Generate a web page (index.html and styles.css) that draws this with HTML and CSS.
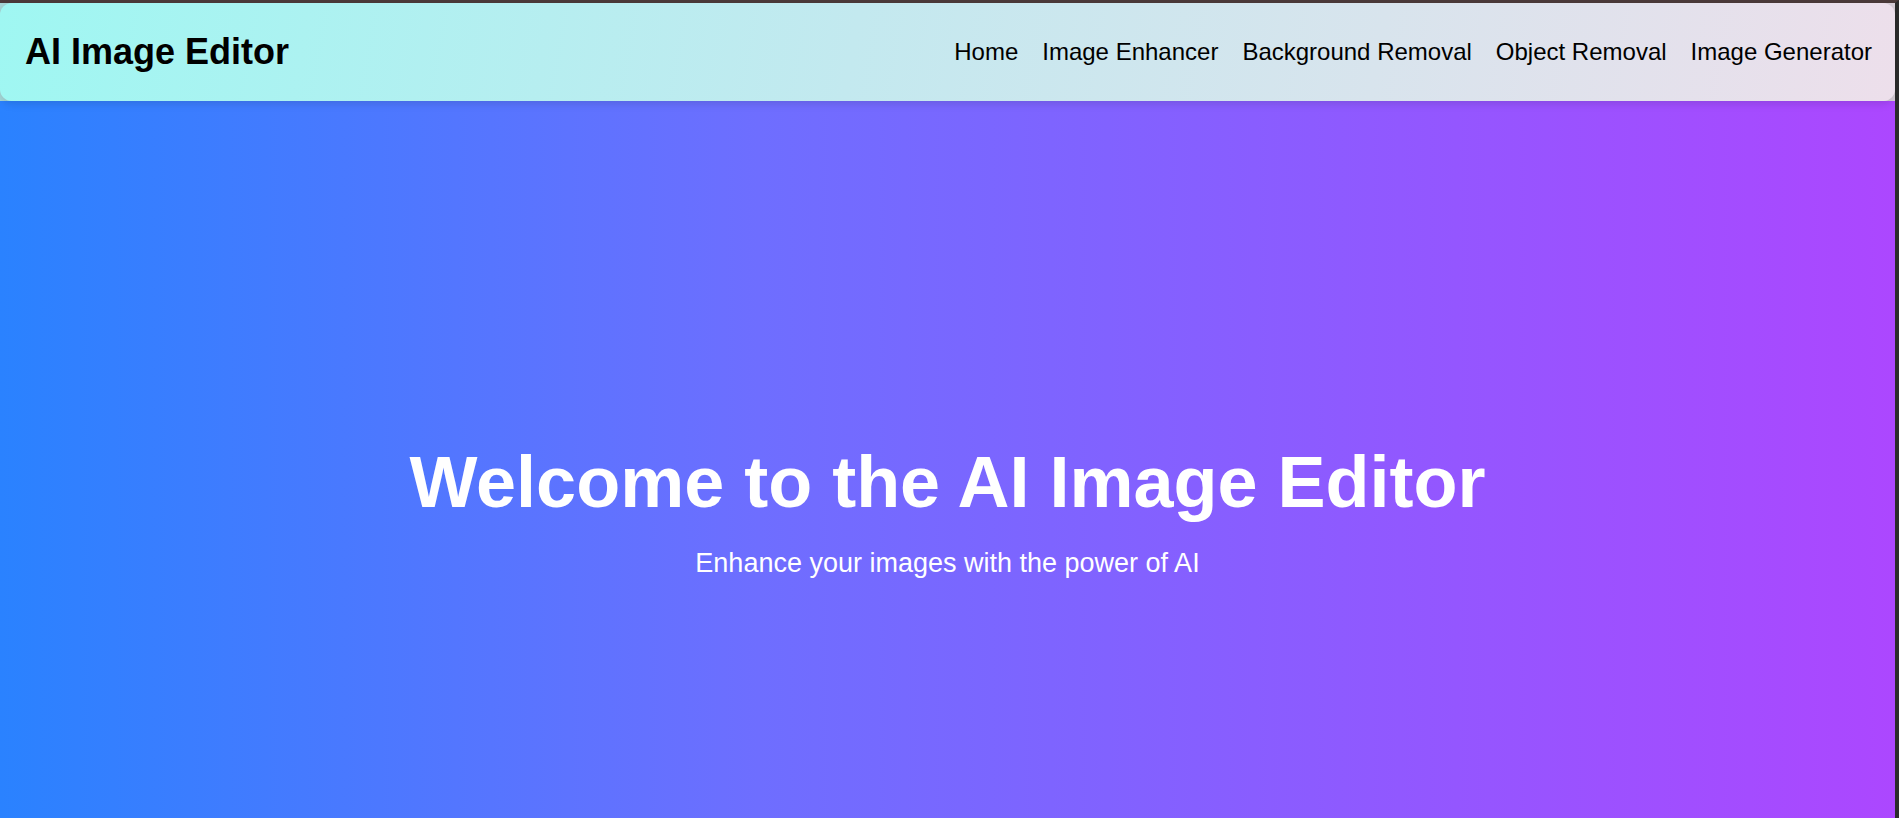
FILE: index.html
```
<!DOCTYPE html>
<html lang="en">
<head>
<meta charset="utf-8">
<title>AI Image Editor</title>
<link rel="stylesheet" href="styles.css">
</head>
<body>
<div class="frame">
  <div class="header-wrap">
    <header class="site-header">
      <h1 class="logo">AI Image Editor</h1>
      <nav class="nav">
        <a href="#">Home</a>
        <a href="#">Image Enhancer</a>
        <a href="#">Background Removal</a>
        <a href="#">Object Removal</a>
        <a href="#">Image Generator</a>
      </nav>
    </header>
  </div>
  <section class="hero">
    <h2 class="hero-title">Welcome to the AI Image Editor</h2>
    <p class="hero-sub">Enhance your images with the power of AI</p>
  </section>
</div>
</body>
</html>
```

FILE: styles.css
```
html, body {
  margin: 0;
  padding: 0;
}
body {
  font-family: "Liberation Sans", Arial, sans-serif;
  background: #2a2a2a;
}
.frame {
  border-top: 3px solid #4b3a3a;
  border-right: 4px solid #2b2b2b;
}
.header-wrap {
  background: linear-gradient(to right, #a6d8d8, #d8ced8);
  position: relative;
  z-index: 2;
}
.site-header {
  height: 98px;
  box-sizing: border-box;
  display: flex;
  align-items: center;
  justify-content: space-between;
  padding: 0 23px 0 25px;
  border-radius: 12px;
  background: linear-gradient(100deg, #9ff7f2 0%, #c3e9ef 45%, #eddfeb 100%);
  box-shadow: 0 3px 8px rgba(0, 0, 0, 0.12);
}
.logo {
  margin: 0;
  font-size: 36px;
  font-weight: bold;
  color: #000;
}
.nav {
  display: flex;
  gap: 24px;
}
.nav a {
  color: #000;
  text-decoration: none;
  font-size: 24px;
}
.hero {
  height: 100vh;
  display: flex;
  flex-direction: column;
  align-items: center;
  justify-content: center;
  background: linear-gradient(to right, #2a82ff 0%, #6e6eff 40%, #ac47ff 100%);
  color: #fff;
  text-align: center;
}
.hero-title {
  margin: 0 0 25px;
  font-size: 72px;
  font-weight: bold;
}
.hero-sub {
  margin: 0;
  font-size: 27px;
}
```
